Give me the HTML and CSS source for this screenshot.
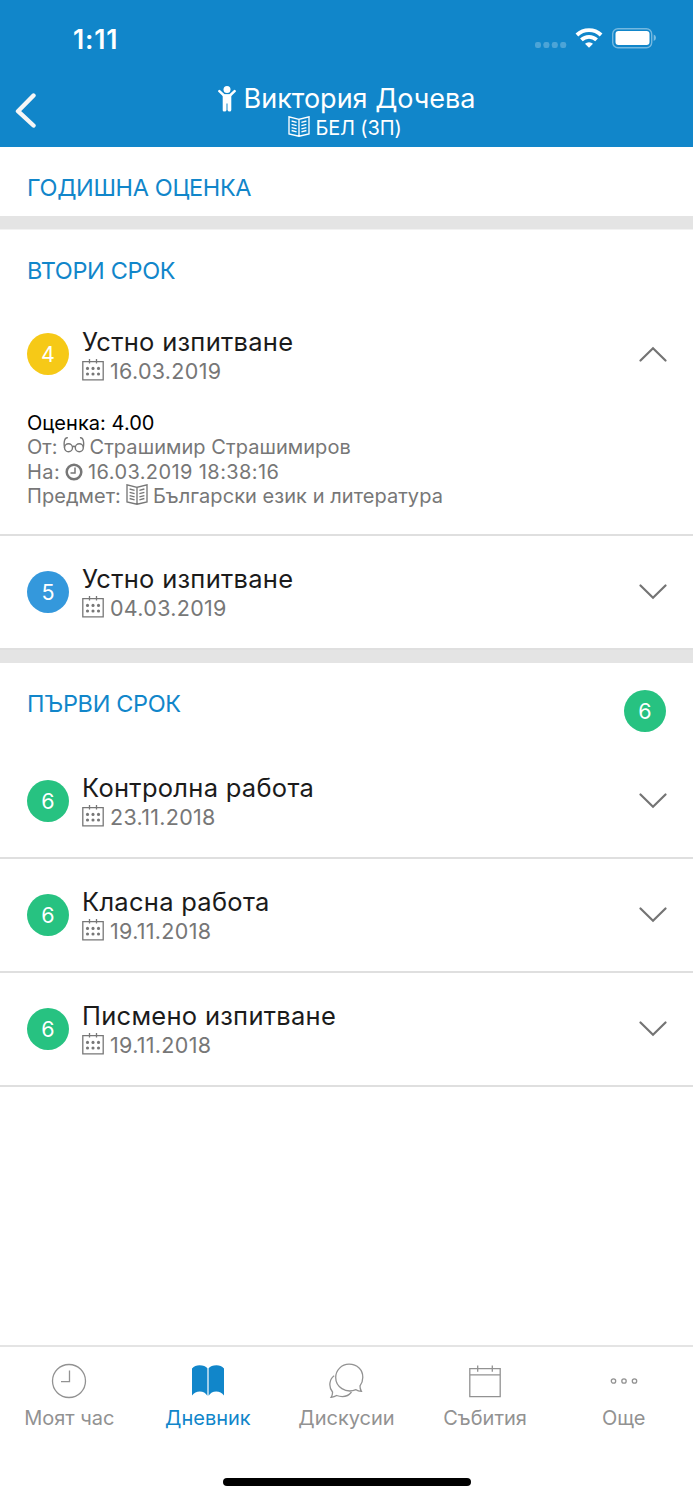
FILE: index.html
```html
<!DOCTYPE html>
<html lang="bg">
<head>
<meta charset="utf-8">
<title>Дневник</title>
<link rel="stylesheet" href="styles.css">
</head>
<body>
<svg class="defs" width="0" height="0" aria-hidden="true">
  <defs>
    <symbol id="cal" viewBox="0 0 22 22"><path d="M.8 2.700H21.2V20.900H.8ZM7.500 0V4.500M14.500 0V4.500" fill="none" stroke="currentColor" stroke-width="1.300"/><g fill="currentColor"><circle cx="5.500" cy="9.400" r="1.550"/><circle cx="11" cy="9.400" r="1.550"/><circle cx="16.500" cy="9.400" r="1.550"/><circle cx="5.500" cy="15" r="1.550"/><circle cx="11" cy="15" r="1.550"/><circle cx="16.500" cy="15" r="1.550"/></g></symbol>
    <symbol id="reader" viewBox="0 0 22 21"><path d="M11 3.3 1 .8V18L11 20.2 21 18V.8L11 3.3V20.2M3.6 5l5 1.3M3.6 8.3l5 1.3M3.6 11.6l5 1.3M3.6 14.5l5 1.3M18.4 5l-5 1.3M18.4 8.3l-5 1.3M18.4 11.6l-5 1.3M18.4 14.5l-5 1.3" fill="none" stroke="currentColor" stroke-width="1.35"/></symbol>
    <symbol id="down" viewBox="0 0 28 16"><path d="M1.5 1.5 14 13.7 26.500 1.500" fill="none" stroke="currentColor" stroke-width="2.2" stroke-linecap="round"/></symbol>
  </defs>
</svg>
<header class="header">
  <div class="status">
    <span class="clock">1:11</span>
    <svg class="signals" width="122" height="24" viewBox="0 0 122 24">
      <g fill="#fff" fill-opacity=".25"><rect x="0" y="14" width="6" height="6" rx="2.200"/><rect x="8.400" y="14" width="6" height="6" rx="2.200"/><rect x="16.800" y="14" width="6" height="6" rx="2.200"/><rect x="25.200" y="14" width="6" height="6" rx="2.200"/></g>
      <g fill="none" stroke="#fff" stroke-width="3.900"><path d="M41.900 7A17.500 17.500 0 0 1 66.100 7"/><path d="M46.400 11.900A11 11 0 0 1 61.600 11.900"/></g>
      <path d="M50 15.800a5.700 5.700 0 0 1 8 0L54 19.800Z" fill="#fff"/>
      <rect x="77.700" y=".7" width="39" height="19" rx="5.300" fill="none" stroke="#fff" stroke-opacity=".42" stroke-width="1.400"/>
      <rect x="80.500" y="3" width="34" height="14" rx="3" fill="#fff"/><path d="M118.700 6.500q2.300 1 2.300 3.300t-2.300 3.300Z" fill="#fff" fill-opacity=".45"/>
    </svg>
  </div>
  <div class="nav">
    <svg class="back" width="22" height="36" viewBox="0 0 22 36"><path d="M18.500 2.500 3 18.200 18.500 32.500" fill="none" stroke="#f6f6f6" stroke-width="4.400" stroke-linecap="round" stroke-linejoin="round"/></svg>
    <div class="heading">
      <h1 class="name"><svg width="18" height="26" viewBox="0 0 18 26"><circle cx="9" cy="3.600" r="3.500" fill="#fff"/><path d="M1.400 5.200 6 9.500H12L16.600 5.200" fill="none" stroke="#fff" stroke-width="2.500" stroke-linecap="round" stroke-linejoin="round"/><path d="M4.700 8.500H13.300V24q0 1.500-1.700 1.500T9.500 24V17.500H8.500V24q0 1.500-2.100 1.500T4.700 24Z" fill="#fff"/></svg><span class="t">Виктория Дочева</span></h1>
      <div class="subject"><svg width="22" height="21"><use href="#reader"/></svg><span class="t">БЕЛ (ЗП)</span></div>
    </div>
  </div>
</header>
<main class="content">
  <section class="term annual"><div class="term-head"><h2>ГОДИШНА ОЦЕНКА</h2></div></section>
  <section class="term second">
    <div class="term-head"><h2>ВТОРИ СРОК</h2></div>
    <article class="entry expanded">
      <div class="row"><span class="grade yellow">4</span><div class="info"><h3>Устно изпитване</h3><p class="date"><svg width="22" height="22"><use href="#cal"/></svg><span class="t">16.03.2019</span></p></div><svg class="chevron up" width="28" height="16"><use href="#down"/></svg></div>
      <div class="details">
        <p class="score"><span>Оценка: 4.00</span></p>
        <p class="teacher"><span>От:</span><svg width="22" height="18" viewBox="0 0 22 18"><g fill="none" stroke="currentColor" stroke-width="1.400"><circle cx="5.500" cy="11.800" r="4"/><circle cx="16.300" cy="11.800" r="4"/><path d="M9.300 11q1.600-1.600 3.200 0M1.500 11.500C.5 6 1.600 1.200 4.800 1.800M20.300 11.500C21.300 6 20.200 1.200 17 1.800"/></g></svg><span>Страшимир Страшимиров</span></p>
        <p class="time"><span>На:</span><svg width="18" height="18" viewBox="0 0 18 18"><g fill="none" stroke="currentColor"><circle cx="9" cy="9" r="7.300" stroke-width="2.500"/><path d="M10 4.500V9.900H5.500" stroke-width="1.500"/></g></svg><span>16.03.2019 18:38:16</span></p>
        <p class="course"><span>Предмет:</span><svg width="22" height="21"><use href="#reader"/></svg><span>Български език и литература</span></p>
      </div>
    </article>
    <article class="entry"><div class="row"><span class="grade blue">5</span><div class="info"><h3>Устно изпитване</h3><p class="date"><svg width="22" height="22"><use href="#cal"/></svg><span class="t">04.03.2019</span></p></div><svg class="chevron" width="28" height="16"><use href="#down"/></svg></div></article>
  </section>
  <section class="term first">
    <div class="term-head"><h2>ПЪРВИ СРОК</h2><span class="grade green">6</span></div>
    <article class="entry"><div class="row"><span class="grade green">6</span><div class="info"><h3>Контролна работа</h3><p class="date"><svg width="22" height="22"><use href="#cal"/></svg><span class="t">23.11.2018</span></p></div><svg class="chevron" width="28" height="16"><use href="#down"/></svg></div></article>
    <article class="entry"><div class="row"><span class="grade green">6</span><div class="info"><h3>Класна работа</h3><p class="date"><svg width="22" height="22"><use href="#cal"/></svg><span class="t">19.11.2018</span></p></div><svg class="chevron" width="28" height="16"><use href="#down"/></svg></div></article>
    <article class="entry"><div class="row"><span class="grade green">6</span><div class="info"><h3>Писмено изпитване</h3><p class="date"><svg width="22" height="22"><use href="#cal"/></svg><span class="t">19.11.2018</span></p></div><svg class="chevron" width="28" height="16"><use href="#down"/></svg></div></article>
  </section>
</main>
<footer class="footer">
  <nav class="tabs">
    <a class="tab"><svg width="36" height="36" viewBox="0 0 36 36"><g fill="none" stroke="currentColor" stroke-width="1.300"><circle cx="18" cy="18" r="16.500"/><path d="M18.500 7.500V18.700H10"/></g></svg><span>Моят час</span></a>
    <a class="tab active"><svg width="36" height="36" viewBox="0 0 36 36"><path d="M2 5.500Q5 2.200 9.500 2.200Q15 2.200 17.400 5.300V32.800Q14.800 28.500 9.800 28.500Q5 28.500 2 32.400ZM34 5.500Q31 2.200 26.500 2.200Q21 2.200 18.600 5.300V32.800Q21.200 28.500 26.200 28.500Q31 28.500 34 32.400Z" fill="currentColor"/></svg><span>Дневник</span></a>
    <a class="tab"><svg width="36" height="36" viewBox="0 0 36 36"><g fill="none" stroke="currentColor" stroke-width="1.300"><path d="M32 22.800Q31.800 25.500 33.400 28.400Q30 28.300 28 26.700C17.500 30.800 7.700 23.800 7.700 14.500A13.300 13.300 0 0 1 21 1.200C29.500 1.200 34.800 7.200 34.800 14.200Q34.800 19 32 22.800Z"/><path d="M6.200 12.800C1.700 15.800 0 23.300 4.500 29Q4.700 32 3.100 34.300Q6.500 34 8.500 32.500C14 34.400 20 33.500 23.500 29"/></g></svg><span>Дискусии</span></a>
    <a class="tab"><svg width="36" height="36" viewBox="0 0 36 36"><path d="M2.800 5.600H33.200V33.600H2.800ZM2.800 11.900H33.200M10.700 2.500V8.800M25.300 2.500V8.800" fill="none" stroke="currentColor" stroke-width="1.300"/></svg><span>Събития</span></a>
    <a class="tab"><svg width="36" height="36" viewBox="0 0 36 36"><g fill="none" stroke="currentColor" stroke-width="1.300"><circle cx="7.500" cy="18" r="2.200"/><circle cx="18" cy="18" r="2.200"/><circle cx="28.500" cy="18" r="2.200"/></g></svg><span>Още</span></a>
  </nav>
  <div class="home"></div>
</footer>
</body>
</html>
```
FILE: styles.css
```css
* { box-sizing: border-box; }
body { margin: 0; width: 693px; height: 1500px; display: flex; flex-direction: column; background: #fff; font-family: Inter, "Noto Sans", sans-serif; overflow: hidden; }
h1, h2, h3, p { margin: 0; font-weight: 400; white-space: nowrap; }
svg { display: block; flex: none; }
.defs { position: absolute; }
.header { height: 147px; background: #1186ca; color: #fff; flex: none; }
.status { display: flex; justify-content: space-between; align-items: flex-start; height: 77px; padding: 24px 36px 0 73px; }
.clock { font-size: 26.500px; line-height: 30px; font-weight: 600; letter-spacing: .8px; }
.signals { margin-top: 4px; }
.nav { display: grid; grid-template-columns: 60px 1fr 60px; height: 70px; }
.back { margin: 16px 0 0 15px; }
.heading { display: flex; flex-direction: column; align-items: center; padding-top: 5px; }
.name { display: flex; align-items: center; gap: 8px; font-size: 27px; line-height: 34px; letter-spacing: 0; }
.subject { display: flex; align-items: center; gap: 5px; font-size: 20px; line-height: 24px; letter-spacing: -.15px; margin-right: 3px; }
.subject svg { margin-top: -4px; }
.content { flex: 1; }
.term-head { display: flex; justify-content: space-between; padding: 26px 27px 0; }
.annual { height: 82px; border-bottom: 13px solid #e4e4e4; }
.second { border-top: 1px solid #f2f2f2; border-bottom: 13px solid #e4e4e4; }
.second .term-head { height: 68px; }
.first .term-head { height: 82px; }
.term-head .grade { margin-top: 1px; }
h2 { color: #1186ca; font-size: 23.500px; line-height: 30px; letter-spacing: -.35px; }
.grade { width: 42px; height: 42px; border-radius: 50%; color: #fff; font-size: 21.500px; line-height: 42px; text-align: center; flex: none; }
.yellow { background: #f6c917; }
.blue { background: #3498dc; }
.green { background: #27c281; }
.entry { border-bottom: 2px solid #dfdfdf; }
.row { display: flex; align-items: center; height: 112px; padding: 0 27px; }
.info { flex: 1; margin-left: 13px; padding-top: 2px; }
h3 { color: #1b1b1b; font-size: 25.500px; line-height: 32px; letter-spacing: .28px; }
.date { display: flex; align-items: center; gap: 6px; color: #777; font-size: 21.500px; line-height: 27px; letter-spacing: .3px; }
.date svg { margin-top: -3px; }
.chevron { color: #747474; margin-right: -.5px; }
.up { transform: rotate(180deg); }
.details { padding: 1px 27px 25.800px; color: #777; font-size: 20px; letter-spacing: .05px; }
.details p { display: flex; align-items: center; gap: 5px; height: 24.300px; line-height: 24px; }
.details svg { margin-top: -4px; }
.details .time { letter-spacing: .4px; }
.details .time svg { margin-top: 0; }
.details .score { color: #000; }
.footer { height: 155px; border-top: 2px solid #e4e4e4; flex: none; }
.tabs { display: grid; grid-template-columns: repeat(5, 1fr); height: 130px; }
.tab { display: flex; flex-direction: column; align-items: center; padding-top: 16px; color: #929292; font-size: 20px; line-height: 24px; letter-spacing: 0; }
.tab span { margin-top: 7px; }
.active { color: #1186ca; }
.home { width: 248px; height: 8px; border-radius: 4px; background: #000; margin: 1px auto 0; }
```
